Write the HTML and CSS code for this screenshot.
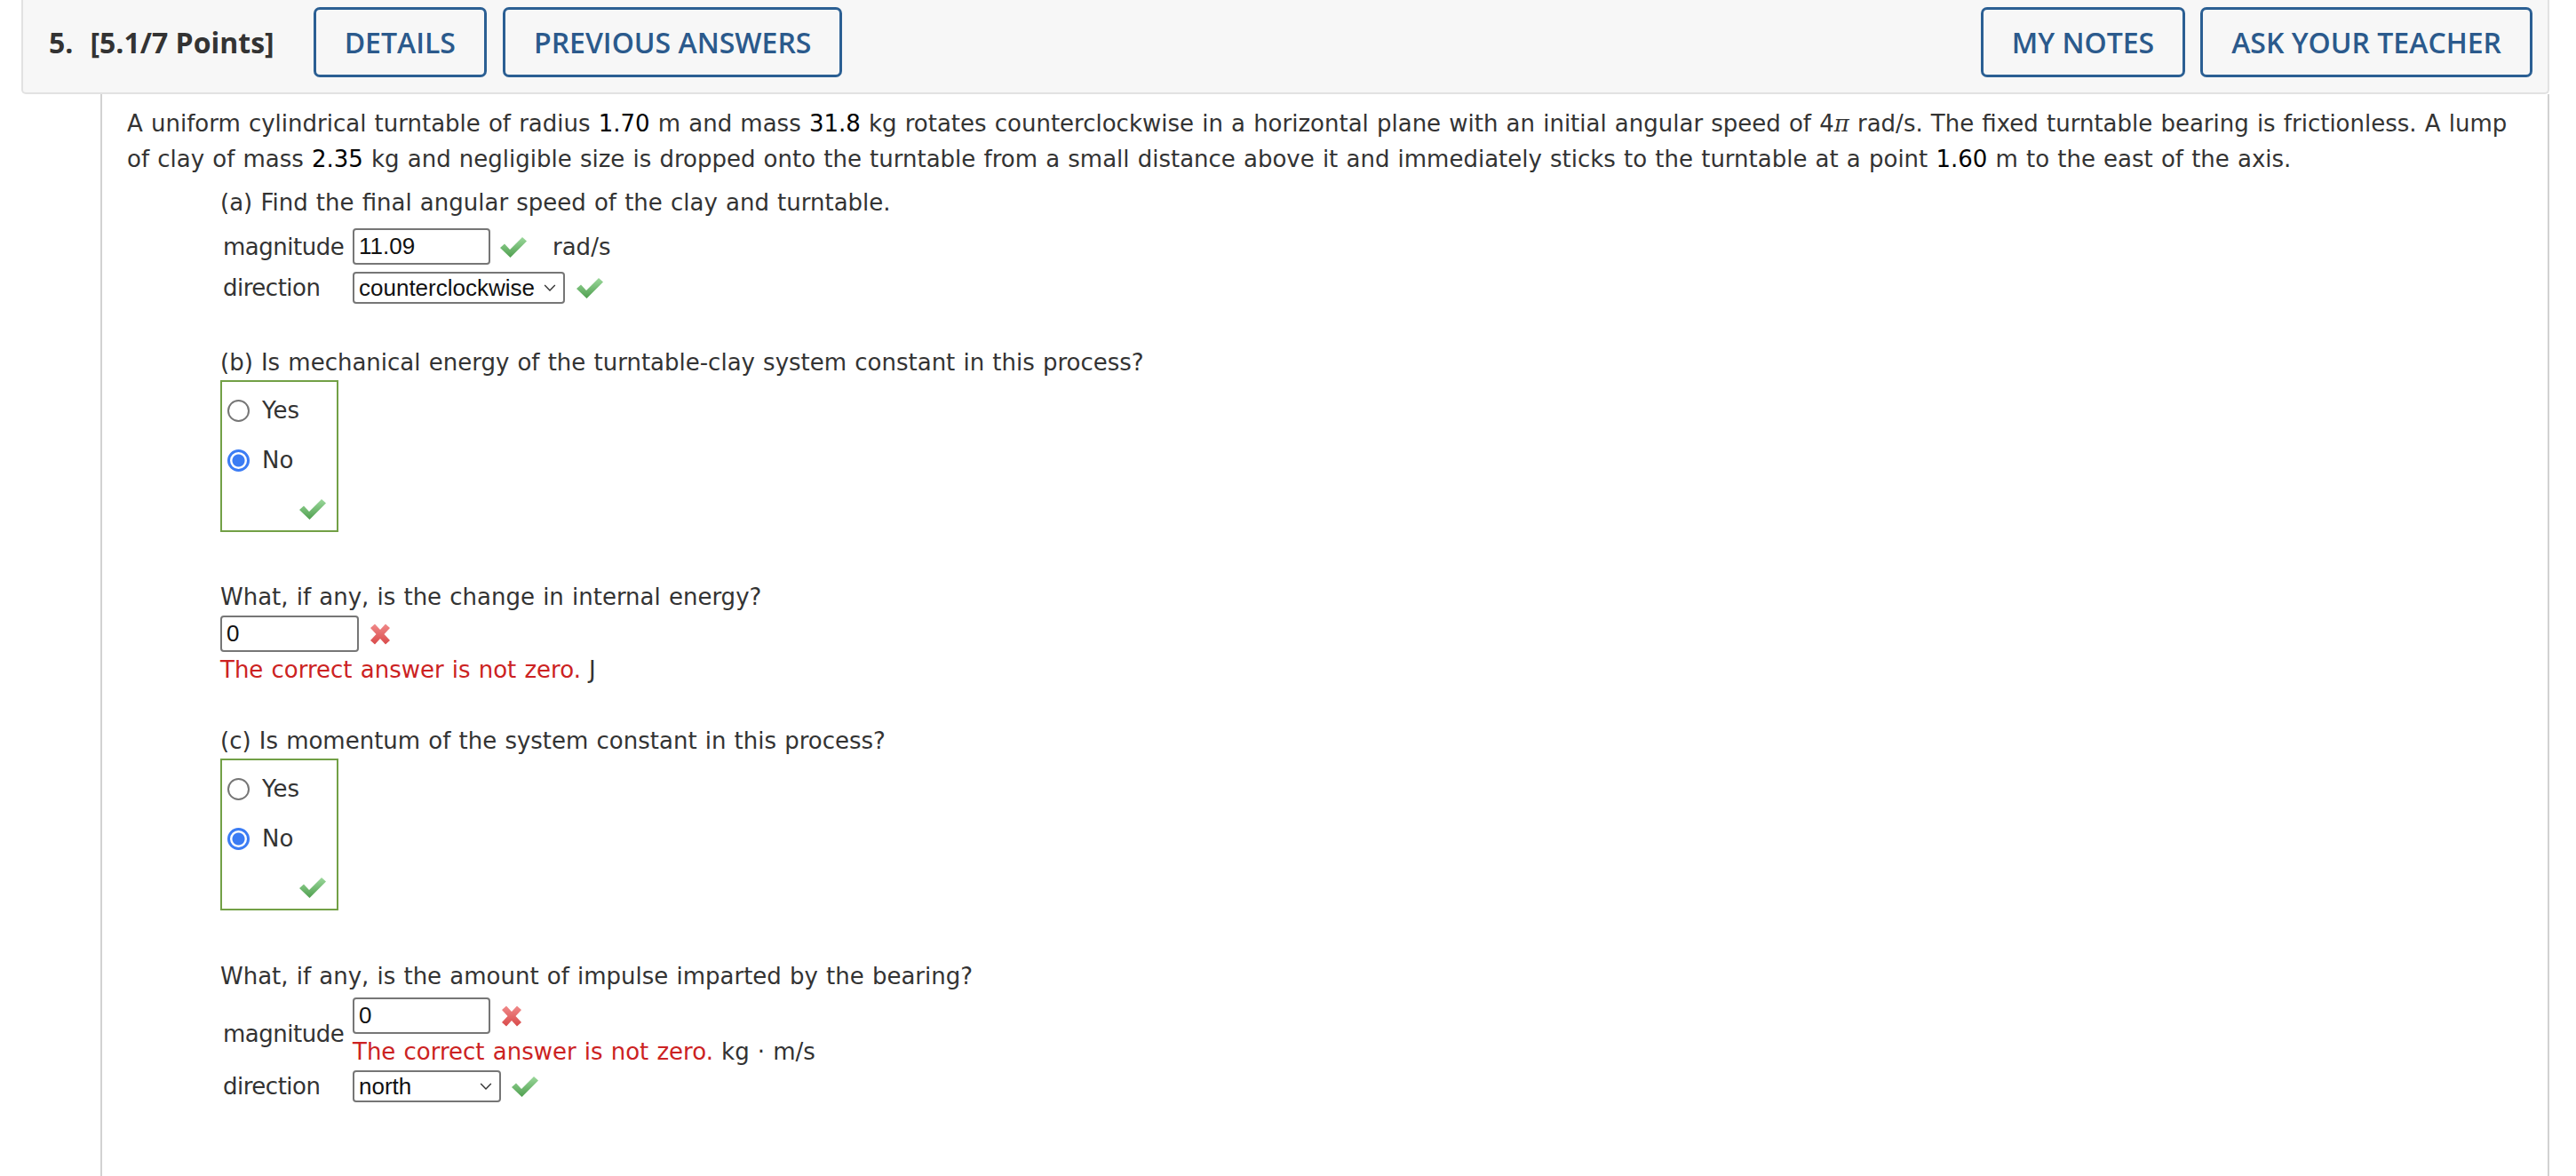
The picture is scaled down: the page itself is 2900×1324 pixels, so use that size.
FILE: index.html
```html
<!DOCTYPE html>
<html lang="en">
<head>
<meta charset="utf-8">
<title>Question 5</title>
<link rel="stylesheet" href="styles.css">
</head>
<body>
<div class="page">
  <header class="qhead">
    <div class="qhead-group">
      <h2 class="qtitle"><span class="qnum">5.</span><span>[5.1/7 Points]</span></h2>
      <button class="hbtn">DETAILS</button>
      <button class="hbtn">PREVIOUS ANSWERS</button>
    </div>
    <div class="qhead-group qhead-right">
      <button class="hbtn">MY NOTES</button>
      <button class="hbtn">ASK YOUR TEACHER</button>
    </div>
  </header>

  <section class="qbody">
    <p class="stem">A uniform cylindrical turntable of radius <span class="num">1.70</span> m and mass <span class="num">31.8</span> kg rotates counterclockwise in a horizontal plane with an initial angular speed of 4<i class="pi">π</i> rad/s. The fixed turntable bearing is frictionless. A lump of clay of mass <span class="num">2.35</span> kg and negligible size is dropped onto the turntable from a small distance above it and immediately sticks to the turntable at a point <span class="num">1.60</span> m to the east of the axis.</p>

    <div class="parts">
      <p class="prompt prompt-a">(a) Find the final angular speed of the clay and turntable.</p>
      <div class="arow arow-a1">
        <span class="lbl">magnitude</span>
        <span class="cell">
          <input class="field w155" type="text" value="11.09" readonly>
          <svg class="mark ok" viewBox="0 0 32 26"><defs><linearGradient id="g1" x1="0" y1="0" x2="0" y2="1"><stop offset="0" stop-color="#9bd89b"/><stop offset="1" stop-color="#4f9f4f"/></linearGradient></defs><path d="M1 14 L6 9.5 L12 16 L26 2 L31 6.5 L12.5 25 Z" fill="url(#g1)"/></svg>
          <span class="unit">rad/s</span>
        </span>
      </div>
      <div class="arow arow-a2">
        <span class="lbl">direction</span>
        <span class="cell">
          <span class="sel w239"><span class="sel-txt">counterclockwise</span><svg class="chev" viewBox="0 0 12 8"><path d="M1 1.5 L6 6.5 L11 1.5" fill="none" stroke="#333" stroke-width="1.2"/></svg></span>
          <svg class="mark ok ok2" viewBox="0 0 32 26"><path d="M1 14 L6 9.5 L12 16 L26 2 L31 6.5 L12.5 25 Z" fill="url(#g1)"/></svg>
        </span>
      </div>

      <p class="prompt prompt-b">(b) Is mechanical energy of the turntable-clay system constant in this process?</p>
      <div class="choices">
        <label class="choice"><input type="radio" name="b" class="rad"><span>Yes</span></label>
        <label class="choice"><input type="radio" name="b" class="rad" checked><span>No</span></label>
        <div class="verdict"><svg class="mark ok" viewBox="0 0 32 26"><path d="M1 14 L6 9.5 L12 16 L26 2 L31 6.5 L12.5 25 Z" fill="url(#g1)"/></svg></div>
      </div>

      <p class="prompt prompt-e">What, if any, is the change in internal energy?</p>
      <div class="inline-ans">
        <input class="field w156" type="text" value="0" readonly>
        <svg class="mark bad" viewBox="0 0 28 26"><defs><linearGradient id="g2" x1="0" y1="0" x2="0" y2="1"><stop offset="0" stop-color="#f08a8a"/><stop offset="1" stop-color="#d94a4a"/></linearGradient></defs><path d="M3 6 L8 1.5 L14 8 L20 1.5 L25 6 L18.5 13 L25 20 L20 24.5 L14 18 L8 24.5 L3 20 L9.5 13 Z" fill="url(#g2)"/></svg>
      </div>
      <p class="feedback"><span class="err">The correct answer is not zero.</span> J</p>

      <p class="prompt prompt-c">(c) Is momentum of the system constant in this process?</p>
      <div class="choices">
        <label class="choice"><input type="radio" name="c" class="rad"><span>Yes</span></label>
        <label class="choice"><input type="radio" name="c" class="rad" checked><span>No</span></label>
        <div class="verdict"><svg class="mark ok" viewBox="0 0 32 26"><path d="M1 14 L6 9.5 L12 16 L26 2 L31 6.5 L12.5 25 Z" fill="url(#g1)"/></svg></div>
      </div>

      <p class="prompt prompt-i">What, if any, is the amount of impulse imparted by the bearing?</p>
      <div class="arow arow-i1">
        <span class="lbl">magnitude</span>
        <span class="cell cell-stack">
          <span class="cell-line">
            <input class="field w155" type="text" value="0" readonly>
            <svg class="mark bad bad2" viewBox="0 0 28 26"><path d="M3 6 L8 1.5 L14 8 L20 1.5 L25 6 L18.5 13 L25 20 L20 24.5 L14 18 L8 24.5 L3 20 L9.5 13 Z" fill="url(#g2)"/></svg>
          </span>
          <span class="feedback"><span class="err">The correct answer is not zero.</span> kg · m/s</span>
        </span>
      </div>
      <div class="arow arow-i2">
        <span class="lbl">direction</span>
        <span class="cell">
          <span class="sel w167"><span class="sel-txt">north</span><svg class="chev" viewBox="0 0 12 8"><path d="M1 1.5 L6 6.5 L11 1.5" fill="none" stroke="#333" stroke-width="1.2"/></svg></span>
          <svg class="mark ok ok3" viewBox="0 0 32 26"><path d="M1 14 L6 9.5 L12 16 L26 2 L31 6.5 L12.5 25 Z" fill="url(#g1)"/></svg>
        </span>
      </div>

      <div class="submit-row"><span class="submit"></span></div>
    </div>
  </section>
</div>
</body>
</html>
```

FILE: styles.css
```css
html, body {
  margin: 0;
  padding: 0;
  background: #ffffff;
}

.page {
  margin: 0 30px 0 24px;
  font-family: "DejaVu Sans", Verdana, sans-serif;
  font-size: 26px;
  word-spacing: 0.9px;
  color: #333333;
}

.qhead {
  display: flex;
  justify-content: space-between;
  align-items: center;
  background: #f7f7f7;
  border: 2px solid #e2e2e2;
  border-top: none;
  border-radius: 0 0 5px 5px;
  padding: 8px 17px 17px 29px;
  word-spacing: 0;
}

.qhead-group {
  display: flex;
  align-items: center;
  gap: 18px;
}

.qhead-right {
  gap: 17px;
}

.qtitle {
  margin: 0 26px 0 0;
  font-family: "Open Sans", sans-serif;
  font-weight: 700;
  font-size: 32px;
  color: #333333;
  white-space: nowrap;
}

.qnum {
  margin-right: 19px;
}

.hbtn {
  height: 79px;
  box-sizing: border-box;
  padding: 0 32px;
  border: 3px solid #2b5f93;
  border-radius: 7px;
  background: transparent;
  font-family: "Open Sans", sans-serif;
  font-weight: 600;
  font-size: 32px;
  color: #2b5a8c;
  white-space: nowrap;
}

.qbody {
  margin-left: 89px;
  border-left: 2px solid #d2d2d2;
  border-right: 2px solid #d2d2d2;
  padding: 13px 34px 0 28px;
  min-height: 1400px;
}

.stem {
  margin: 0;
  line-height: 40px;
}

.num {
  color: #000000;
}

.pi {
  font-family: "DejaVu Serif", serif;
}

.parts {
  padding-left: 105px;
}

.prompt {
  margin: 0;
  line-height: 40px;
}

.prompt-a { margin-top: 9px; }
.prompt-b { margin-top: 46px; }
.prompt-e { margin-top: 53px; }
.prompt-c { margin-top: 40px; }
.prompt-i { margin-top: 54px; }

.arow {
  display: flex;
  align-items: center;
}

.arow-a1 { margin-top: 9px; }
.arow-a2 { margin-top: 8px; }
.arow-i1 { margin-top: 4px; }
.arow-i2 { margin-top: 1px; }

.lbl {
  width: 146px;
  padding-left: 3px;
  flex: none;
  letter-spacing: -0.5px;
}

.cell {
  display: flex;
  align-items: center;
}

.cell-stack {
  flex-direction: column;
  align-items: flex-start;
}

.cell-line {
  display: flex;
  align-items: center;
}

.field {
  box-sizing: border-box;
  height: 41px;
  border: 2px solid #767676;
  border-radius: 4px;
  padding: 0 5px;
  font-family: "Liberation Sans", Arial, sans-serif;
  font-size: 26px;
  color: #111111;
  background: #ffffff;
  outline: none;
  margin: 0;
}

.w155 { width: 155px; }
.w156 { width: 156px; }

.sel {
  box-sizing: border-box;
  height: 36px;
  display: inline-flex;
  align-items: center;
  justify-content: space-between;
  border: 2px solid #767676;
  border-radius: 4px;
  padding: 0 8px 0 5px;
  font-family: "Liberation Sans", Arial, sans-serif;
  font-size: 26px;
  word-spacing: 0;
  color: #111111;
  background: #ffffff;
}

.w239 { width: 239px; }
.w167 { width: 167px; }

.chev {
  width: 14px;
  height: 10px;
  margin-left: 4px;
}

.mark {
  display: block;
  flex: none;
}

.ok {
  width: 32px;
  height: 26px;
  margin-left: 10px;
}

.ok2 { margin-left: 12px; }
.ok3 { margin-left: 11px; }

.bad {
  width: 28px;
  height: 26px;
  margin-left: 10px;
}

.unit {
  margin-left: 28px;
}

.choices {
  box-sizing: border-box;
  width: 133px;
  border: 2px solid #72a046;
  padding: 12px 0 11px 6px;
}

.choice {
  display: flex;
  align-items: center;
  height: 40px;
  margin-bottom: 16px;
}

.choice:nth-of-type(2) {
  margin-bottom: 0;
}

.rad {
  appearance: none;
  -webkit-appearance: none;
  box-sizing: border-box;
  width: 25px;
  height: 25px;
  margin: 0 14px 0 0;
  border: 2px solid #767676;
  border-radius: 50%;
  background: #ffffff;
  flex: none;
}

.rad:checked {
  border: 3px solid #3b7cf4;
  background: radial-gradient(circle, #3b7cf4 0 6.5px, #ffffff 7.5px);
}

.verdict {
  display: flex;
  justify-content: flex-end;
  padding-right: 11px;
  margin-top: 22px;
}

.inline-ans {
  display: flex;
  align-items: center;
  margin-top: 1px;
}

.feedback {
  margin: 0;
  line-height: 40px;
  white-space: nowrap;
}

.err {
  color: #cc2222;
}

.submit-row {
  margin-top: 83px;
  padding-left: 119px;
}

.submit {
  display: block;
  width: 165px;
  height: 60px;
  box-sizing: border-box;
  border: 2px solid #c99868;
  border-radius: 4px;
  background: #f2dfcb;
}
```
